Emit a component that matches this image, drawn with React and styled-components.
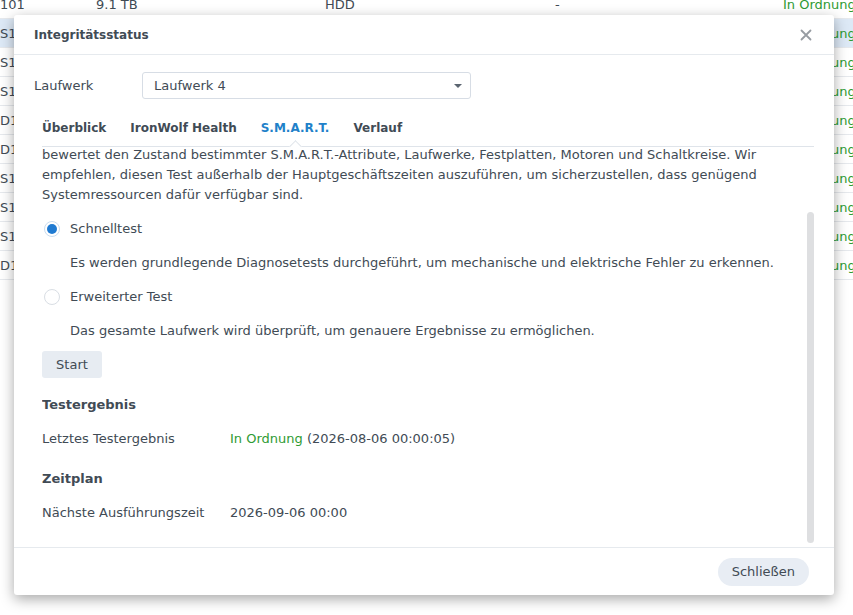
import React from "react";
import styled, { createGlobalStyle } from "styled-components";

const GlobalStyle = createGlobalStyle`
    html, body {
        margin: 0;
        padding: 0;
        background: #ffffff;
    }
    body {
        font-family: "DejaVu Sans", Verdana, sans-serif;
        font-size: 13px;
        color: #414b55;
    }
`;

const Page = styled.div`
    position: relative;
    width: 853px;
    height: 615px;
    overflow: hidden;
    background: #ffffff;
`;

const Table = styled.div`
    margin-top: -10px;
    display: flex;
    flex-direction: column;
`;

const TableRow = styled.div`
    height: 28px;
    border-bottom: 1px solid #e6e9ed;
    display: grid;
    grid-template-columns: 96px 229px 230px 228px 1fr;
    align-items: center;
    white-space: nowrap;
    background: ${({ selected }) => (selected ? "#dde9f6" : "transparent")};
`;

const Cell = styled.div`
    font-size: 13px;
    color: ${({ ok }) => (ok ? "#2f9b33" : "#414b55")};
    overflow: hidden;
`;

const Dialog = styled.div`
    position: absolute;
    left: 14px;
    top: 15px;
    width: 820px;
    height: 580px;
    background: #ffffff;
    border-radius: 3px;
    box-shadow: 0 4px 14px rgba(0, 0, 0, 0.35);
    display: flex;
    flex-direction: column;
`;

const Header = styled.div`
    height: 39px;
    flex: none;
    border-bottom: 1px solid #e6eaee;
    display: flex;
    align-items: center;
    justify-content: space-between;
    padding: 0 20px;
`;

const Title = styled.div`
    font-size: 12px;
    font-weight: 700;
    color: #414b55;
`;

const CloseButton = styled.button`
    background: transparent;
    border: none;
    padding: 0;
    width: 16px;
    height: 16px;
    display: flex;
    align-items: center;
    justify-content: center;
    cursor: pointer;
`;

const Body = styled.div`
    flex: 1;
    min-height: 0;
    display: flex;
    flex-direction: column;
`;

const DriveRow = styled.div`
    display: flex;
    align-items: center;
    margin: 17px 20px 0;
`;

const DriveLabel = styled.div`
    width: 108px;
`;

const Select = styled.div`
    width: 329px;
    height: 27px;
    box-sizing: border-box;
    border: 1px solid #d7dde5;
    border-radius: 3px;
    display: flex;
    align-items: center;
    justify-content: space-between;
    padding: 0 8px 0 11px;
`;

const Caret = styled.span`
    width: 0;
    height: 0;
    border-left: 4px solid transparent;
    border-right: 4px solid transparent;
    border-top: 4px solid #5b6570;
`;

const Tabs = styled.div`
    margin: 10px 20px 0 28px;
    height: 37px;
    border-bottom: 1px solid #dfe4ea;
    display: flex;
    align-items: center;
    gap: 24px;
`;

const Tab = styled.div`
    position: relative;
    height: 37px;
    display: flex;
    align-items: center;
    font-size: 12px;
    font-weight: 700;
    color: ${({ active }) => (active ? "#1f81c9" : "#414b55")};

    ${({ active }) =>
        active &&
        `
    &::after {
        content: "";
        position: absolute;
        left: 50%;
        bottom: -5px;
        width: 8px;
        height: 8px;
        margin-left: -4px;
        background: #ffffff;
        border-top: 1px solid #dfe4ea;
        border-left: 1px solid #dfe4ea;
        transform: rotate(45deg);
    }
    `}
`;

const ScrollArea = styled.div`
    flex: 1;
    min-height: 0;
    display: flex;
    margin: 0 20px 0 28px;
    overflow: hidden;
`;

const Content = styled.div`
    flex: 1;
    display: flex;
    flex-direction: column;
    line-height: 20px;
`;

const Intro = styled.p`
    margin: -2px 0 0;
    line-height: 20px;
    padding-right: 20px;
`;

const RadioRow = styled.label`
    display: flex;
    align-items: center;
    height: 20px;
    margin-top: 14px;
`;

const Radio = styled.span`
    width: 16px;
    height: 16px;
    box-sizing: border-box;
    border-radius: 50%;
    border: 1px solid ${({ checked }) => (checked ? "#c9dcef" : "#d9dee4")};
    background: #ffffff;
    margin: 0 10px 0 2px;
    display: flex;
    align-items: center;
    justify-content: center;

    &::after {
        content: "";
        width: 10px;
        height: 10px;
        border-radius: 50%;
        background: ${({ checked }) => (checked ? "#1f7ad1" : "transparent")};
    }
`;

const Description = styled.div`
    margin: 14px 0 0 28px;
    height: 20px;
`;

const StartButton = styled.button`
    align-self: flex-start;
    margin-top: 10px;
    width: 60px;
    height: 27px;
    border: none;
    border-radius: 3px;
    background: #e7ecf2;
    font-family: inherit;
    font-size: 13px;
    color: #414b55;
    cursor: pointer;
`;

const SectionTitle = styled.div`
    font-weight: 700;
    margin-top: ${({ gap }) => gap}px;
`;

const InfoRow = styled.div`
    display: flex;
    margin-top: 14px;
`;

const InfoLabel = styled.div`
    width: 188px;
`;

const Ok = styled.span`
    color: #2f9b33;
`;

const ScrollTrack = styled.div`
    width: 7px;
    flex: none;
    padding-top: 65px;
    padding-bottom: 4px;
    display: flex;
`;

const Thumb = styled.div`
    flex: 1;
    background: #dedfe1;
    border-radius: 4px;
`;

const Footer = styled.div`
    height: 47px;
    flex: none;
    border-top: 1px solid #e6eaee;
    display: flex;
    align-items: center;
    justify-content: flex-end;
    padding: 0 25px;
`;

const CloseAction = styled.button`
    height: 28px;
    padding: 0 14px;
    border: none;
    border-radius: 14px;
    background: #e8edf4;
    font-family: inherit;
    font-size: 13px;
    color: #414b55;
    cursor: pointer;
`;

const rows = ["S1", "S1", "S1", "D1", "D1", "S1", "S1", "S1", "D1"];

export default function App() {
    return (
        <Page>
            <GlobalStyle />
            <Table>
                <TableRow>
                    <Cell>101</Cell>
                    <Cell>9.1 TB</Cell>
                    <Cell>HDD</Cell>
                    <Cell>-</Cell>
                    <Cell ok>In Ordnung</Cell>
                </TableRow>
                {rows.map((name, i) => (
                    <TableRow key={i} selected={i === 0}>
                        <Cell>{name}</Cell>
                        <Cell />
                        <Cell />
                        <Cell />
                        <Cell ok>In Ordnung</Cell>
                    </TableRow>
                ))}
            </Table>

            <Dialog>
                <Header>
                    <Title>Integritätsstatus</Title>
                    <CloseButton aria-label="Schließen">
                        <svg width="12" height="12" viewBox="0 0 12 12">
                            <path
                                d="M1.5 1.5 L10.5 10.5 M10.5 1.5 L1.5 10.5"
                                stroke="#979ca2"
                                strokeWidth="1.8"
                                strokeLinecap="round"
                            />
                        </svg>
                    </CloseButton>
                </Header>

                <Body>
                    <DriveRow>
                        <DriveLabel>Laufwerk</DriveLabel>
                        <Select>
                            <span>Laufwerk 4</span>
                            <Caret />
                        </Select>
                    </DriveRow>

                    <Tabs>
                        <Tab>Überblick</Tab>
                        <Tab>IronWolf Health</Tab>
                        <Tab active>S.M.A.R.T.</Tab>
                        <Tab>Verlauf</Tab>
                    </Tabs>

                    <ScrollArea>
                        <Content>
                            <Intro>
                                bewertet den Zustand bestimmter S.M.A.R.T.-Attribute, Laufwerke, Festplatten, Motoren und Schaltkreise. Wir
                                empfehlen, diesen Test außerhalb der Hauptgeschäftszeiten auszuführen, um sicherzustellen, dass genügend
                                Systemressourcen dafür verfügbar sind.
                            </Intro>

                            <RadioRow>
                                <Radio checked />
                                Schnelltest
                            </RadioRow>
                            <Description>
                                Es werden grundlegende Diagnosetests durchgeführt, um mechanische und elektrische Fehler zu erkennen.
                            </Description>

                            <RadioRow>
                                <Radio />
                                Erweiterter Test
                            </RadioRow>
                            <Description>
                                Das gesamte Laufwerk wird überprüft, um genauere Ergebnisse zu ermöglichen.
                            </Description>

                            <StartButton>Start</StartButton>

                            <SectionTitle gap={17}>Testergebnis</SectionTitle>
                            <InfoRow>
                                <InfoLabel>Letztes Testergebnis</InfoLabel>
                                <div>
                                    <Ok>In Ordnung</Ok> (2026-08-06 00:00:05)
                                </div>
                            </InfoRow>

                            <SectionTitle gap={20}>Zeitplan</SectionTitle>
                            <InfoRow>
                                <InfoLabel>Nächste Ausführungszeit</InfoLabel>
                                <div>2026-09-06 00:00</div>
                            </InfoRow>
                        </Content>
                        <ScrollTrack>
                            <Thumb />
                        </ScrollTrack>
                    </ScrollArea>
                </Body>

                <Footer>
                    <CloseAction>Schließen</CloseAction>
                </Footer>
            </Dialog>
        </Page>
    );
}
